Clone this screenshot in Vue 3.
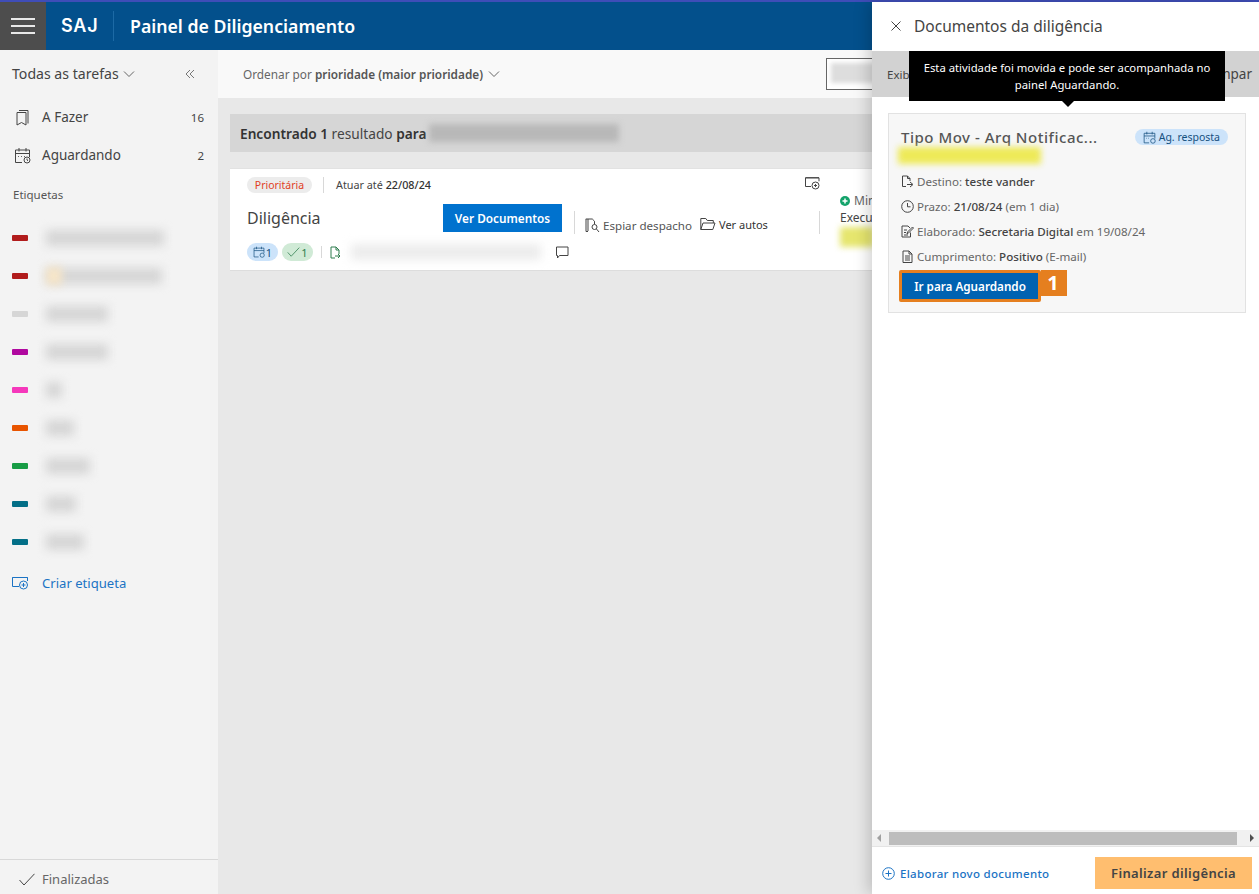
<template>
  <div class="app">
    <header class="topbar">
      <button class="burger"><span></span><span></span><span></span></button>
      <div class="brand">SAJ</div>
      <div class="title">Painel de Diligenciamento</div>
    </header>
    <div class="body">
      <aside class="sidebar">
        <div class="side-head">
          <span class="side-title">Todas as tarefas</span>
          <svg class="chev" width="12" height="8" viewBox="0 0 12 8"><path d="M1 1.500l5 5 5-5" /></svg>
          <svg class="collapse" width="10" height="10" viewBox="0 0 10 10"><path d="M5 1L1 5l4 4M9 1L5 5l4 4" /></svg>
        </div>
        <nav class="nav">
          <div class="nav-item">
            <svg width="14" height="17" viewBox="0 0 14 17" class="line"><path d="M3.500 1.500h9v13M1.500 3.500h9v12.500l-4.500-2.500-4.500 2.500z" /></svg>
            <span class="nav-label">A Fazer</span><span class="count">16</span>
          </div>
          <div class="nav-item">
            <svg width="17" height="17" viewBox="0 0 17 17" class="line"><path d="M8 15.500H1.500V3h14v7M1.500 6.500h14M5 1v3.500M12 1v3.500M4 9.500h.8M7 9.500h.8M10 9.500h.8" /><circle cx="13" cy="13" r="3" /><path d="M13 11.500V13l1 .8" /></svg>
            <span class="nav-label">Aguardando</span><span class="count">2</span>
          </div>
        </nav>
        <div class="tags-label">Etiquetas</div>
        <ul class="tags">
          <li v-for="(t, i) in tags" :key="i" class="tag">
            <i class="swatch" :style="{ background: t.color }"></i>
            <span class="tag-text">
              <span class="blur" :style="{ width: t.w + 'px' }"></span>
              <span v-if="t.spot" class="spot"></span>
            </span>
          </li>
        </ul>
        <div class="create">
          <svg width="17" height="14" viewBox="0 0 17 14" class="line blue"><path d="M7 10.500H.5V1.500h15v3.500M.5 1.500h15" /><circle cx="11.500" cy="9" r="4" /><path d="M11.500 7v4M9.500 9h4" /></svg>
          <span>Criar etiqueta</span>
        </div>
        <div class="finished">
          <svg width="16" height="13" viewBox="0 0 16 13" class="line"><path d="M.5 7l4.500 5L15.500 .8" /></svg>
          <span>Finalizadas</span>
        </div>
      </aside>

      <main class="main">
        <div class="sortbar">
          <span class="sort">Ordenar por <b>prioridade (maior prioridade)</b></span>
          <svg class="chev" width="12" height="8" viewBox="0 0 12 8"><path d="M1 1.500l5 5 5-5" /></svg>
          <div class="search"><span class="blur search-blur"></span></div>
        </div>
        <div class="content">
          <div class="result">
            <span><b>Encontrado 1</b> resultado <b>para</b></span>
            <span class="blur result-blur"></span>
          </div>
          <article class="card">
            <div class="card-left">
              <div class="row-meta">
                <span class="pill-pri">Prioritária</span>
                <span class="vline"></span>
                <span class="due">Atuar até <b>22/08/24</b></span>
                <svg class="add-tag line" width="15" height="13" viewBox="0 0 15 13"><path d="M6 9.500H.5V.8h13.500v3.500M.5 .8h13.500" /><circle cx="10.500" cy="8.500" r="3.500" /><path d="M10.500 7v3M9 8.500h3" /></svg>
              </div>
              <div class="row-main">
                <h2>Diligência</h2>
                <button class="btn-docs">Ver Documentos</button>
                <span class="vline tall"></span>
                <span class="act">
                  <svg width="15" height="15" viewBox="0 0 15 15" class="line"><path d="M3 1v12M.8 1h6.500l2.200 2.200v3M3 13.500H1V1" /><circle cx="9.500" cy="9" r="2.500" /><path d="M11.500 11l2.500 3" /></svg>
                  Espiar despacho
                </span>
                <span class="act dark">
                  <svg width="16" height="14" viewBox="0 0 16 14" class="line"><path d="M.8 12.500V1.500h5l1.500 2h6v2.500M.8 12.500h12l2.200-6.500H3z" /></svg>
                  Ver autos
                </span>
              </div>
              <div class="row-foot">
                <span class="chip chip-blue">
                  <svg width="12" height="12" viewBox="0 0 17 17" class="line navy"><path d="M8 15.500H1.500V3h14v7M1.500 6.500h14M5 1v3.500M12 1v3.500" /><circle cx="13" cy="13" r="3" /></svg>1
                </span>
                <span class="chip chip-green">
                  <svg width="13" height="10" viewBox="0 0 16 13" class="line green"><path d="M.5 7l4.500 5L15.500 .8" /></svg>1
                </span>
                <span class="vline short"></span>
                <svg width="11" height="13" viewBox="0 0 11 13" class="line green"><path d="M5 12H1V1h5l3 3v4M6 1v3h3M5 10h5M8 8l2 2-2 2" /></svg>
                <span class="blur foot-blur"></span>
                <svg class="line comment" width="13" height="13" viewBox="0 0 13 13"><path d="M.5 1h11.500v8.500H3.500l-2 2.500V9.500h-1z" /></svg>
              </div>
            </div>
            <span class="vline section"></span>
            <div class="card-right">
              <div class="status">
                <svg width="10" height="10" viewBox="0 0 10 10"><circle cx="5" cy="5" r="5" fill="#14a36b" /><path d="M5 2.500v5M2.500 5h5" stroke="#fff" stroke-width="1.500" /></svg>
                Minha
              </div>
              <div class="exec">Execução</div>
              <span class="marker"></span>
            </div>
          </article>
        </div>
      </main>
    </div>

    <section class="drawer">
      <div class="drawer-head">
        <svg width="10" height="10" viewBox="0 0 10 10" class="line"><path d="M.5 .5l9 9M9.500 .5l-9 9" /></svg>
        <span>Documentos da diligência</span>
      </div>
      <div class="filterbar">
        <span>Exibir</span><span class="clear">Limpar</span>
      </div>
      <div class="tooltip">Esta atividade foi movida e pode ser acompanhada no painel Aguardando.</div>
      <div class="drawer-body">
        <div class="doc">
          <div class="doc-top">
            <span class="doc-title">Tipo Mov - Arq Notificac...</span>
            <span class="await">
              <svg width="13" height="13" viewBox="0 0 17 17" class="line navy"><path d="M8 15.500H1.500V3h14v7M1.500 6.500h14M5 1v3.500M12 1v3.500M4 9.500h.8M7 9.500h.8" /><circle cx="13" cy="13" r="3" /></svg>
              Ag. resposta
            </span>
          </div>
          <span class="highlight"></span>
          <div class="doc-line">
            <svg width="13" height="13" viewBox="0 0 13 13" class="line"><path d="M5 11.500H1.500V1h5l2.500 2.500V6M6.500 1v2.500H9M6 9.500h5M9 7l3 2.500L9 12" /></svg>
            <span>Destino: <b>teste vander</b></span>
          </div>
          <div class="doc-line">
            <svg width="13" height="13" viewBox="0 0 13 13" class="line"><circle cx="6.500" cy="6.500" r="5.800" /><path d="M6.500 3v3.800h3" /></svg>
            <span>Prazo: <b>21/08/24</b> (em 1 dia)</span>
          </div>
          <div class="doc-line">
            <svg width="13" height="13" viewBox="0 0 13 13" class="line"><path d="M9.500 7.500v4.500H1V1h6l2 2M3 5h3M3 7.500h2M3 10h4M6 9l.5-2L11.500 2l1 1-5 5z" /></svg>
            <span>Elaborado: <b>Secretaria Digital</b> em 19/08/24</span>
          </div>
          <div class="doc-line">
            <svg width="13" height="13" viewBox="0 0 13 13" class="line"><path d="M2 1h6l3 3v8.500H2zM8 1v3h3M4 6h5M4 8h5M4 10h5" /></svg>
            <span>Cumprimento: <b>Positivo</b> (E-mail)</span>
          </div>
          <div class="callout">
            <button class="btn-go">Ir para Aguardando</button>
            <span class="num">1</span>
          </div>
        </div>
      </div>
      <div class="hscroll">
        <i class="arrow-l"></i>
        <span class="thumb"></span>
        <i class="arrow-r"></i>
      </div>
      <footer class="drawer-foot">
        <span class="new-doc">
          <svg width="13" height="13" viewBox="0 0 13 13" class="line blue"><circle cx="6.500" cy="6.500" r="5.800" /><path d="M6.500 3.500v6M3.500 6.500h6" /></svg>
          Elaborar novo documento
        </span>
        <button class="btn-finish">Finalizar diligência</button>
      </footer>
    </section>
  </div>
</template>

<script setup>
const tags = [
  { color: '#b11c1c', w: 118 },
  { color: '#b11c1c', w: 116, spot: true },
  { color: '#d6d6d6', w: 62 },
  { color: '#b0089f', w: 62 },
  { color: '#f538bb', w: 16 },
  { color: '#e85400', w: 28 },
  { color: '#179c45', w: 44 },
  { color: '#036f87', w: 30 },
  { color: '#036f87', w: 38 },
]
</script>

<style>
html, body { margin: 0; height: 100%; overflow: hidden; }
</style>

<style scoped>
* { box-sizing: border-box; }
.app {
  position: relative;
  width: 1259px;
  height: 894px;
  overflow: hidden;
  display: flex;
  flex-direction: column;
  font-family: "Noto Sans", "Open Sans", sans-serif;
  font-size: 12px;
  color: #444;
  background: #e8e8e8;
}
b { font-weight: 500; }
svg { flex: none; display: block; }
.line { fill: none; stroke: #444; stroke-width: 1; }
.line.blue { stroke: #1b73c4; }
.line.navy { stroke: #16507f; }
.line.green { stroke: #2f7d4f; }
.chev { fill: none; stroke: #666; stroke-width: 1; }
.blur { display: block; height: 16px; background: #d6d6d6; filter: blur(5px); }

.topbar {
  flex: none;
  height: 50px;
  display: flex;
  align-items: center;
  background: #03508c;
  border-top: 2px solid #3f4db8;
  color: #fff;
}
.burger {
  width: 46px;
  height: 48px;
  border: 0;
  padding: 0 11px;
  background: #4d4d4d;
  display: flex;
  flex-direction: column;
  justify-content: center;
  gap: 5px;
}
.burger span { display: block; height: 2px; background: #e8e8e8; }
.brand {
  width: 68px;
  height: 30px;
  padding-left: 15px;
  font-family: Inter, "Noto Sans", sans-serif;
  font-size: 18px;
  letter-spacing: .8px;
  line-height: 30px;
  font-weight: 600;
  border-right: 1px solid #1d6aa5;
}
.title { margin-left: 16px; font-size: 17.700px; font-weight: 600; }

.body { flex: 1; display: flex; min-height: 0; }

.sidebar {
  flex: none;
  width: 218px;
  background: #f3f3f3;
  display: flex;
  flex-direction: column;
}
.side-head {
  height: 48px;
  display: flex;
  align-items: center;
  padding-left: 12px;
  gap: 4px;
}
.side-title { font-size: 14.100px; line-height: 20px; color: #444; }
.collapse { fill: none; stroke: #777; stroke-width: 1; margin-left: 46px; }
.nav-item {
  height: 38px;
  display: flex;
  align-items: center;
  padding: 0 14px;
  font-size: 13.500px;
}
.nav-item svg { width: 17px; }
.nav-label { margin-left: 11px; flex: 1; }
.count { font-size: 11.500px; }
.tags-label { margin-top: 12px; padding-left: 13px; font-size: 11.500px; line-height: 18px; color: #555; }
.tags { list-style: none; margin: 15px 0 0; padding: 0; }
.tag { height: 38px; display: flex; align-items: center; padding-left: 12px; }
.swatch { width: 16px; height: 6px; border-radius: 1px; margin-right: 14px; }
.tag-text { position: relative; display: block; padding-left: 4px; }
.spot {
  position: absolute;
  left: 4px;
  top: -1px;
  width: 16px;
  height: 18px;
  background: #f7e6c8;
  filter: blur(4px);
}
.create {
  margin-top: 3px;
  height: 38px;
  display: flex;
  align-items: center;
  gap: 13px;
  padding-left: 12px;
  font-size: 13.100px;
  color: #1b73c4;
}
.finished {
  margin-top: auto;
  height: 35px;
  border-top: 1px solid #d8d8d8;
  display: flex;
  align-items: center;
  gap: 7px;
  padding: 4px 0 0 19px;
  font-size: 13px;
  color: #666;
}

.main { flex: 1; min-width: 0; display: flex; flex-direction: column; }
.sortbar {
  flex: none;
  height: 48px;
  background: #f9f9f9;
  display: flex;
  align-items: center;
  padding-left: 25px;
  gap: 5px;
  font-size: 11.800px;
  color: #666;
}
.sort b { color: #555; font-weight: 600; }
.search {
  margin-left: auto;
  width: 433px;
  height: 32px;
  border: 1px solid #666;
  padding: 4px;
  background: #fff;
  overflow: hidden;
}
.search-blur { height: 20px; background: #ddd; filter: blur(2px); }
.content { padding: 16px 12px; }
.result {
  height: 38px;
  background: #d6d6d6;
  display: flex;
  align-items: center;
  padding-left: 10px;
  font-size: 13.700px;
  gap: 3px;
}
.result b { color: #333; font-weight: 600; }
.result-blur { width: 190px; height: 18px; background: #b8b8b8; filter: blur(3px); }

.card {
  margin-top: 16px;
  height: 103px;
  background: #fff;
  border-top: 1px solid #e2e2e2;
  border-bottom: 1px solid #ddd;
  display: flex;
  padding-left: 17px;
}
.card-left { width: 572px; }
.row-meta { height: 31px; display: flex; align-items: center; }
.pill-pri {
  width: 65px;
  height: 16px;
  border-radius: 8px;
  background: #ececec;
  color: #e1401f;
  font-size: 10.500px;
  line-height: 16px;
  text-align: center;
}
.vline { display: block; width: 1px; background: #d8d8d8; }
.row-meta .vline { height: 16px; margin: 0 12px 0 11px; }
.due { font-size: 10.800px; }
.due b { color: #333; }
.add-tag { margin: 0 -1px 2px auto; }
.row-main { height: 36px; display: flex; align-items: center; }
.row-main h2 { margin: 0; width: 196px; font-size: 16px; font-weight: 400; color: #444; }
.btn-docs {
  width: 119px;
  height: 28px;
  border: 0;
  background: #0072ce;
  color: #fff;
  font: 600 11.800px "Noto Sans", sans-serif;
}
.vline.tall { height: 23px; margin: 8px 10px 0 12px; }
.act { display: flex; align-items: center; gap: 3px; padding-top: 14px; font-size: 11.600px; white-space: nowrap; color: #555; }
.act.dark { margin-left: 8px; color: #333; font-size: 11px; padding-top: 12px; }
.row-foot { height: 32px; display: flex; align-items: center; }
.chip {
  height: 18px;
  width: 31px;
  border-radius: 9px;
  display: flex;
  align-items: center;
  justify-content: center;
  gap: 1px;
  font-size: 11px;
  margin-right: 4px;
}
.chip-blue { background: #cce3fa; color: #16507f; }
.chip-green { background: #d0ead6; color: #2f7d4f; }
.vline.short { height: 12px; margin: 0 8px 0 4px; }
.foot-blur { width: 190px; margin-left: 10px; background: #ececec; }
.comment { margin-left: 15px; }
.vline.section { height: 23px; margin: 42px 0 0 0; }
.card-right { margin-left: 20px; padding-top: 23px; }
.status { display: flex; align-items: center; gap: 4px; color: #666; white-space: nowrap; line-height: 18px; }
.exec { line-height: 16px; }
.marker { display: block; width: 34px; height: 20px; margin-top: 1px; background: #e6e66e; filter: blur(3px); }

.drawer {
  position: absolute;
  top: 2px;
  right: 0;
  bottom: 0;
  width: 387px;
  background: #fff;
  display: flex;
  flex-direction: column;
  box-shadow: -4px 0 14px rgba(0, 0, 0, .18);
}
.drawer-head {
  flex: none;
  height: 49px;
  display: flex;
  align-items: center;
  padding: 0 0 2px 19px;
  gap: 13px;
  font-size: 15.500px;
  color: #444;
}
.filterbar {
  flex: none;
  height: 46px;
  background: #d2d2d2;
  display: flex;
  align-items: center;
  justify-content: space-between;
  padding: 0 7px 0 15px;
  font-size: 11.500px;
}
.clear { font-size: 13.500px; }
.tooltip {
  position: absolute;
  top: 49px;
  left: 37px;
  width: 316px;
  height: 50px;
  padding: 8px 10px;
  background: #000;
  color: #fff;
  font-size: 11.300px;
  line-height: 17px;
  text-align: center;
}
.tooltip::after {
  content: "";
  position: absolute;
  left: 153px;
  top: 50px;
  border: 6px solid transparent;
  border-top-color: #000;
  border-bottom: 0;
}
.drawer-body { flex: 1; min-height: 0; padding: 16px 13px 0 16px; }
.doc {
  height: 200px;
  background: #f7f7f7;
  border: 1px solid #e2e2e2;
  padding: 11px 12px 0 12px;
}
.doc-top { display: flex; align-items: center; justify-content: space-between; height: 24px; padding-right: 5px; }
.doc-title { font-size: 15px; font-weight: 500; letter-spacing: .52px; color: #555; white-space: nowrap; }
.await {
  display: flex;
  align-items: center;
  gap: 3px;
  height: 16px;
  padding: 0 8px;
  border-radius: 8px;
  background: #cce3fa;
  color: #16507f;
  font-size: 10.500px;
  white-space: nowrap;
}
.highlight { display: block; width: 143px; height: 17px; margin: -2px 0 5px -3px; background: #eeea58; filter: blur(3px); }
.doc-line {
  height: 25px;
  display: flex;
  align-items: center;
  gap: 3px;
  font-size: 11.600px;
  color: #666;
}
.doc-line b { color: #444; }
.callout { display: flex; align-items: flex-start; margin: 1px 0 0 -2px; }
.btn-go {
  width: 142px;
  height: 32px;
  border: 3px solid #e57f1f;
  border-radius: 2px;
  background: #0062b1;
  color: #fff;
  font: 600 11.700px "Noto Sans", sans-serif;
}
.num {
  width: 26px;
  height: 26px;
  padding-right: 2px;
  background: #e57f1f;
  color: #fff;
  font: 700 20px/26px "Noto Sans", sans-serif;
  text-align: center;
}
.hscroll {
  flex: none;
  height: 17px;
  background: #f1f1f1;
  display: flex;
  align-items: center;
  padding: 0 5px;
  gap: 5px;
  border-bottom: 1px solid #e4e4e4;
}
.arrow-l, .arrow-r { width: 0; height: 0; border: 4px solid transparent; }
.arrow-l { border-right-color: #a0a0a0; border-left: 0; }
.arrow-r { border-left-color: #505050; border-right: 0; }
.thumb { flex: 1; height: 13px; margin: 0 8px 0 3px; background: #bdbdbd; }
.drawer-foot {
  flex: none;
  height: 47px;
  display: flex;
  align-items: center;
  justify-content: space-between;
  padding: 5px 7px 0 10px;
}
.new-doc { display: flex; align-items: center; gap: 5px; color: #1b73c4; font-size: 11.500px; font-weight: 500; letter-spacing: .3px; }
.btn-finish {
  width: 157px;
  height: 32px;
  border: 0;
  background: #ffbe6f;
  color: #444;
  font: 600 13px "Noto Sans", sans-serif;
  letter-spacing: .35px;
}
</style>
